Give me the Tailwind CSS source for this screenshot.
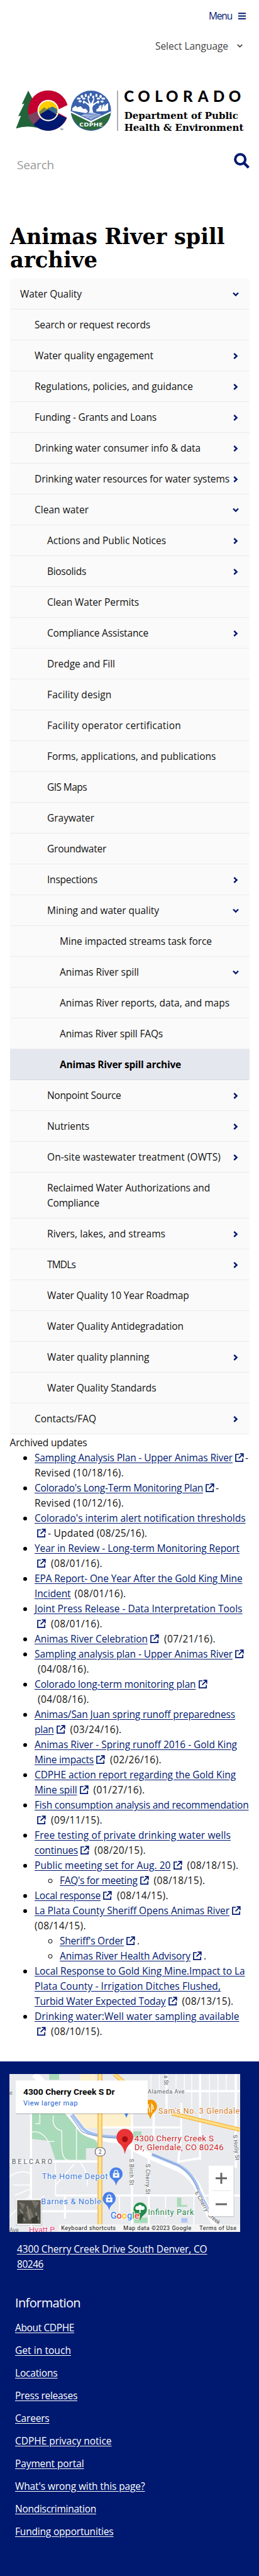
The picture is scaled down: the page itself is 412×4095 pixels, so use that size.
<!DOCTYPE html>
<html lang="en">
<head>
<meta charset="utf-8">
<title>Animas River spill archive</title>
<script src="https://cdn.jsdelivr.net/npm/@tailwindcss/browser@4"></script>
</head>
<body class="w-[412px] bg-white text-[#111] text-[15.5px] leading-6 font-['Open_Sans','Noto_Sans',sans-serif] overflow-x-hidden">

<svg class="hidden">
  <symbol id="ext" viewBox="0 0 14 14"><path d="M6 2H1v11.2h11.2V8.5M7.5 1.2h5.3v5.3M12.6 1.4 5.6 8.4" fill="none" stroke="currentColor" stroke-width="1.7"/></symbol>
  <symbol id="right" viewBox="0 0 8 10"><path d="M1.3 1 5.6 5 1.3 9" fill="none" stroke="currentColor" stroke-width="2.4"/></symbol>
  <symbol id="down" viewBox="0 0 10 8"><path d="M1 1.5 5 5.6 9 1.5" fill="none" stroke="currentColor" stroke-width="2.4"/></symbol>
</svg>

<header class="h-[357px]">
  <div class="flex h-[50px] items-center justify-end pr-[21px] text-[#001970]">
    <span data-w="37">Menu</span>
    <svg class="ml-[10px] h-[11px] w-3" viewBox="0 0 12 11"><path d="M0 1.2h12M0 5.5h12M0 9.8h12" stroke="currentColor" stroke-width="1.9"/></svg>
  </div>
  <div class="flex h-[45px] items-center justify-end pr-[26px] text-[#444]">
    <span data-w="116">Select Language</span>
    <svg class="ml-[14px] h-[6px] w-[9px]" viewBox="0 0 9 6"><path d="M.7.8 4.5 4.6 8.3.8" fill="none" stroke="currentColor" stroke-width="1.7"/></svg>
  </div>
  <svg class="ml-6 mt-[47px] block h-[68px] w-[366px]" viewBox="72 426 1098 204">
    <path d="M135 432 104 497l12-3-29 60 13-2-24 61q50-16 100-4l14-38-30-90Z" fill="#21643a"/>
    <circle cx="230" cy="527" r="96" fill="#c3002f"/>
    <path d="M160 594A96 96 0 0 0 318 563L273 542 225 530Z" fill="#001970"/>
    <path d="M134 549A96 96 0 0 0 160 593L206 548 180 530Z" fill="#7a4460"/>
    <path d="M330 497 274 524l0 12L330 567Z" fill="#fff"/>
    <circle cx="230" cy="527" r="51" fill="#fff"/>
    <circle cx="230" cy="527" r="45" fill="#ffcd00"/>
    <path d="M186 534 210 512l14 9 9-10 38 25A45 45 0 0 1 186 534Z" fill="#7b8440"/>
    <path d="M230 521 249 508 272 520 274 540H200Z" fill="#3a6f8c"/>
    <path d="M190 546 230 522l41 24A45 45 0 0 1 190 546Z" fill="#001970"/>
    <text x="286" y="620" font-size="11" font-family="Open Sans" fill="#222">TM</text>
    <circle cx="434" cy="528" r="96" fill="#3b62ad"/>
    <path d="M339 538 434 584 529 538A96 96 0 0 1 339 538Z" fill="#2b6a3c"/>
    <path d="M339 530 434 576 529 530V538L434 584 339 538Z" fill="#fff"/>
    <path d="M345 528v-12l15-12 10 8 14-6 14 14 12-2 10 14-10 8ZM460 532v-10l12-8v-8l12-6v24l6-22 8-6v12l8-10 10-6v34l-12 4Z" fill="#fff"/>
    <path d="M425 538q6-24-2-34l-25-20 3-3 24 15-8-26 4-1 13 25 13-25 4 1-7 26 27-17 3 3-30 23q-7 14 2 34Z" fill="#fff"/>
    <g fill="#fff">
      <ellipse cx="376" cy="470" rx="9" ry="5"/><ellipse cx="391" cy="460" rx="6" ry="8"/><ellipse cx="382" cy="483" rx="8" ry="5"/><ellipse cx="400" cy="487" rx="5" ry="7"/><ellipse cx="400" cy="470" rx="8" ry="5"/><ellipse cx="409" cy="455" rx="5" ry="8"/><ellipse cx="423" cy="463" rx="5" ry="8"/><ellipse cx="433" cy="451" rx="5" ry="8"/><ellipse cx="445" cy="463" rx="5" ry="7"/><ellipse cx="460" cy="455" rx="5" ry="8"/><ellipse cx="469" cy="470" rx="8" ry="5"/><ellipse cx="480" cy="460" rx="6" ry="8"/><ellipse cx="493" cy="470" rx="9" ry="5"/><ellipse cx="487" cy="484" rx="8" ry="5"/><ellipse cx="468" cy="487" rx="5" ry="7"/>
    </g>
    <path d="M385 548 425 536h20l42 12-52 23Z" fill="#b9cbe8"/>
    <path d="M385 548q30-8 50 0t52 0M402 556q20-6 34 0t34 0M418 563q10-4 18 0t18 0M400 543q20-5 36 0t34 0" fill="none" stroke="#3b62ad" stroke-width="2.5"/>
    <text x="378" y="603" font-size="28" font-weight="700" font-family="Open Sans" fill="#fff" textLength="112" lengthAdjust="spacingAndGlyphs">CDPHE</text>
    <path d="M561 432v192" stroke="#777" stroke-width="3.5"/>
    <text y="487" x="592 658 739 792 873 944 1017 1091" font-size="72" font-weight="900" font-family="Lato" fill="#000">COLORADO</text>
    <g font-size="47" font-weight="700" font-family="DejaVu Serif" fill="#000">
      <text x="593" y="567" textLength="544" lengthAdjust="spacingAndGlyphs">Department of Public</text>
      <text x="593" y="623" textLength="569" lengthAdjust="spacingAndGlyphs">Health &amp; Environment</text>
    </g>
  </svg>
  <div class="mt-[32px] flex items-start justify-between pl-[27px] pr-[15px] text-[19px] text-[#999]">
    <span class="mt-[8px]" data-w="59">Search</span>
    <svg class="mt-px size-[25px] text-[#001970]" viewBox="0 0 25 25"><circle cx="10.2" cy="10.2" r="8" fill="none" stroke="currentColor" stroke-width="4"/><path d="m16 16 7.5 7.5" stroke="currentColor" stroke-width="4.2"/></svg>
  </div>
</header>

<main>
  <h1 class="flex h-[86px] flex-col items-start overflow-hidden whitespace-nowrap pl-4 font-['DejaVu_Serif',serif] text-[36px] leading-[37px] font-bold text-black">
    <span class="block h-[37px] origin-left" data-s="341">Animas River spill</span>
    <span class="block h-[37px] origin-left" data-s="139">archive</span>
  </h1>

  <nav id="nav" class="ml-[15.5px] w-[381px]"></nav>

  <p class="mt-px h-6 pl-[15.5px]"><span data-w="123">Archived updates</span></p>
  <ul id="updates" class="h-[972px] list-disc whitespace-nowrap pl-[55px]"></ul>
</main>

<footer class="h-[818px] bg-[#001970] pt-[20px] text-white">
  <svg class="ml-[15px] block h-[251px] w-[367px] font-[Roboto]" viewBox="45 112 1101 751" preserveAspectRatio="none">
    <rect x="45" y="112" width="1101" height="751" fill="#e8eaed"/>
    <path d="M480 300h150v70H400l-60-70ZM380 112h75v40h-75Z" fill="#fdf0cc"/>
    <path d="M148 300H330L400 370 465 440V465H410V520H265L235 430 148 420ZM235 112h47v28h-47Z" fill="#a9dab9"/>
    <path d="M590 410 640 385h35v30ZM640 795h75v25h-75ZM845 700h20v35h28v8h-48Z" fill="#a9dab9"/>
    <path d="M865 797h30v22h-30Z" fill="#b4c6f5"/>
    <g stroke="#fff" stroke-width="10" fill="none">
      <path d="M148 300V863M45 528H480M265 690H1146M480 366H870M700 193H1146M630 300V863M710 480V863M795 112V300M733 300V410M955 112V520M1125 112V560M865 250V390L850 540M850 530l105-18M310 690V800M180 765H480"/>
      <path d="M45 600q60-40 105-10M60 640l85 0M70 690l70-30M385 535q40 50 30 110M355 540l-90 100M265 530V690M45 790l100-100M210 690l-60 80M570 690v110M790 690v110M925 690v173" stroke-width="5"/>
      <path d="M190 300v48h-20M255 310q-10 60 40 72v70q0 70 35 70M150 388q50-10 80 45h30M365 300V520" stroke-width="5" stroke="#eef7f0"/>
      <path d="M720 112V190M760 112V190M840 112v75M880 112v75M915 112v190M1000 112v230M1040 112v220M1080 112v75" stroke-width="4"/>
    </g>
    <path d="M165 112 215 165 340 310 395 380Q440 415 560 425 650 470 710 500L850 560Q930 600 960 690 1000 800 1060 863" fill="none" stroke="#fff" stroke-width="32"/>
    <path d="M345 305 395 370Q430 408 560 412 M725 495 850 545Q925 585 950 670L1000 770" fill="none" stroke="#a4c0f3" stroke-width="14"/>
    <path d="M335 308 390 385Q440 412 560 417M725 492 855 550Q915 590 942 660" fill="none" stroke="#7697ba" stroke-width="3"/>
    <path d="M477 112V863" stroke="#f7b948" stroke-width="23"/><path d="M477 112V863" stroke="#ffe39a" stroke-width="13"/>
    <path d="m545 112 45 38M820 300 1146 377" stroke="#f7b948" stroke-width="20"/><path d="m545 112 45 38M820 300 1146 377" stroke="#ffdf88" stroke-width="11"/>
    <g stroke="#f1f3f4" stroke-width="5" paint-order="stroke" fill="#5f6368" font-size="27">
      <text x="705" y="204" textLength="175">Alameda Ave</text>
      <text transform="translate(783 118) rotate(90)">a St</text>
      <text transform="translate(1112 402) rotate(84)" textLength="122">S Holly St</text>
      <text transform="translate(618 515) rotate(90)" textLength="126">S Birch St</text>
      <text transform="translate(696 540) rotate(90)" textLength="144">S Cherry St</text>
      <text transform="translate(930 676) rotate(61)" textLength="105">E Cherry</text>
      <text transform="translate(990 785) rotate(40)">Creek</text>
      <text x="45" y="212">e</text><text x="45" y="862">Ave</text>
      <text x="56" y="540" font-size="32" textLength="193">BELCARO</text>
    </g>
    <rect x="454" y="462" width="48" height="40" rx="19" fill="#fff" stroke="#555" stroke-width="3"/>
    <text x="470" y="492" font-size="26" fill="#555">2</text>
    <path d="M594 300h18l-9 20Z" fill="#4285f4"/>
    <path d="M717 327q-5-22-22-38a32 32 0 1 1 45 0q-18 16-23 38Z" fill="#f29900"/><path d="M708 255v14q0 6 5 6v20M724 295v-40q8 10 8 22h-8" stroke="#fff" stroke-width="4" fill="none"/>
    <g stroke="#fff" stroke-width="5" paint-order="stroke" font-size="40">
      <text x="756" y="300" fill="#d57a1c" font-size="37" textLength="388">Sam's No. 3 Glendale</text>
      <text x="641" y="431" fill="#c5221f" textLength="379">4300 Cherry Creek S</text>
      <text x="641" y="474" fill="#c5221f" textLength="426">Dr, Glendale, CO 80246</text>
      <text x="200" y="613" fill="#3573d6" font-size="38" textLength="314">The Home Depot</text>
      <text x="196" y="731" fill="#3573d6" font-size="38" textLength="286">Barnes &amp; Noble</text>
      <text x="706" y="783" fill="#23834a" font-size="38" textLength="219">Infinity Park</text>
      <text x="138" y="866" fill="#e0447c" font-size="38">Hyatt P</text>
    </g>
    <path d="M596 493q-5-32-24-48a40 40 0 1 1 48 0q-19 16-24 48Z" fill="#ea3335"/><circle cx="596" cy="422" r="14" fill="#a50e0e"/>
    <g fill="#4a80e8">
      <path d="M554 643q-4-22-20-32a31 31 0 1 1 40 0q-16 10-20 32ZM521 760q-4-22-20-32a31 31 0 1 1 40 0q-16 10-20 32Z"/>
      <path d="M539 583h30v22h-30ZM506 700h30v22h-30Z" fill="#fff"/>
      <path d="M546 583v-5a8 8 0 0 1 16 0v5M513 700v-5a8 8 0 0 1 16 0v5" fill="none" stroke="#fff" stroke-width="4"/>
      <path d="M547 590a7 7 0 0 0 14 0ZM514 707a7 7 0 0 0 14 0Z"/>
    </g>
    <path d="M669 810q-3-16-20-30a32 32 0 1 1 40 0q-17 14-20 30Z" fill="#238a4c"/><path d="M652 758a9 9 0 0 1 6-17 11 11 0 0 1 20 0 9 9 0 0 1 6 17ZM665 755h6v18h-6Z" fill="#fff"/>
    <text x="527" y="799" font-size="42" font-weight="500" stroke="#fff" stroke-width="6" paint-order="stroke" textLength="138" lengthAdjust="spacingAndGlyphs"><tspan fill="#4285f4">G</tspan><tspan fill="#ea4335">o</tspan><tspan fill="#fbbc05">o</tspan><tspan fill="#4285f4">g</tspan><tspan fill="#34a853">l</tspan><tspan fill="#ea4335">e</tspan></text>
    <rect x="77" y="147" width="628" height="156" fill="#0003"/><rect x="75" y="143" width="630" height="156" fill="#fff"/>
    <text x="111" y="212" font-size="39" font-weight="700" fill="#000" textLength="437" lengthAdjust="spacingAndGlyphs">4300 Cherry Creek S Dr</text>
    <text x="111" y="263" font-size="33" fill="#2062d0" textLength="259">View larger map</text>
    <rect x="76" y="708" width="124" height="124" fill="#0003"/><rect x="77" y="706" width="121" height="123" rx="5" fill="#fff"/><rect x="82" y="712" width="112" height="112" fill="#55544c"/>
    <path d="m90 720 30 12-12 26ZM150 712l18 40 20-30ZM125 770l20-20 16 40-22 20Z" fill="#75726a"/><path d="m130 740 12 60M100 780l20 30M170 770l14 34M95 755l14 20" stroke="#8b867b" stroke-width="7"/><path d="M84 790q14-25 30-4l-8 34H84ZM150 800l30-16v38h-26Z" fill="#393a33"/>
    <rect x="998" y="552" width="120" height="240" fill="#0002"/><rect x="996" y="548" width="119" height="240" fill="#fff"/><path d="M1010 667h92" stroke="#e6e6e6" stroke-width="3"/>
    <path d="M1029 608h54M1056 582v52M1029 731h54" stroke="#666" stroke-width="9"/>
    <rect x="280" y="826" width="866" height="37" fill="#f5f5f5" fill-opacity=".88"/>
    <g font-size="27" fill="#111"><text x="292" y="854" textLength="260">Keyboard shortcuts</text><text x="589" y="854" textLength="324">Map data ©2023 Google</text><text x="952" y="854" textLength="176">Terms of Use</text></g>
  </svg>
  <p class="mt-[15px] h-[75px] whitespace-nowrap pl-[27px]"><a class="underline underline-offset-2"><span data-w="302.5">4300 Cherry Creek Drive South Denver, CO</span><br><span data-w="42">80246</span></a></p>
  <h2 class="h-[50px] pl-6 pt-[11px] text-[20px]"><span data-w="104">Information</span></h2>
  <ul class="flex flex-col gap-3 whitespace-nowrap pl-6">
    <li><a class="underline underline-offset-2" data-w="94">About CDPHE</a></li>
    <li><a class="underline underline-offset-2" data-w="89">Get in touch</a></li>
    <li><a class="underline underline-offset-2" data-w="67.5">Locations</a></li>
    <li><a class="underline underline-offset-2" data-w="99">Press releases</a></li>
    <li><a class="underline underline-offset-2" data-w="54.5">Careers</a></li>
    <li><a class="underline underline-offset-2" data-w="153.5">CDPHE privacy notice</a></li>
    <li><a class="underline underline-offset-2" data-w="109.5">Payment portal</a></li>
    <li><a class="underline underline-offset-2" data-w="206.5">What's wrong with this page?</a></li>
    <li><a class="underline underline-offset-2" data-w="129">Nondiscrimination</a></li>
    <li><a class="underline underline-offset-2" data-w="156.5">Funding opportunities</a></li>
  </ul>
</footer>

<script>
// Navigation rows: [level, label, label width, chevron]
const rows = [
  [0,'Water Quality',98,'down'],[1,'Search or request records',184],[1,'Water quality engagement',189,'right'],
  [1,'Regulations, policies, and guidance',252,'right'],[1,'Funding - Grants and Loans',194,'right'],
  [1,'Drinking water consumer info & data',264,'right'],[1,'Drinking water resources for water systems',310,'right'],
  [1,'Clean water',86,'down'],[2,'Actions and Public Notices',189,'right'],[2,'Biosolids',62,'right'],
  [2,'Clean Water Permits',146],[2,'Compliance Assistance',161,'right'],[2,'Dredge and Fill',108],[2,'Facility design',102.5],
  [2,'Facility operator certification',213],[2,'Forms, applications, and publications',268.5],[2,'GIS Maps',63],
  [2,'Graywater',75],[2,'Groundwater',94],[2,'Inspections',80,'right'],[2,'Mining and water quality',178,'down'],
  [3,'Mine impacted streams task force',242],[3,'Animas River spill',126,'down'],[3,'Animas River reports, data, and maps',270],
  [3,'Animas River spill FAQs',164],[3,'Animas River spill archive',193,'current'],
  [2,'Nonpoint Source',117.5,'right'],[2,'Nutrients',67,'right'],[2,'On-site wastewater treatment (OWTS)',276,'right'],
  [2,'Reclaimed Water Authorizations and|Compliance','259|83'],[2,'Rivers, lakes, and streams',188,'right'],
  [2,'TMDLs',45,'right'],[2,'Water Quality 10 Year Roadmap',225.5],[2,'Water Quality Antidegradation',217],
  [2,'Water quality planning',162.5,'right'],[2,'Water Quality Standards',173.5],[1,'Contacts/FAQ',98,'right']
];
const pads = ['pl-[16.5px]','pl-[39.5px]','pl-[59.5px]','pl-[79.5px]'];
const fit = (text, w) => {
  const ws = String(w).split('|');
  return text.split('|').map((t, i) => `<span data-w="${ws[i]}">${t.replace('&','&amp;')}</span>`).join('<br>');
};
document.getElementById('nav').innerHTML = rows.map(([l, t, w, k]) => {
  const skin = k === 'current' ? 'bg-[#e5e7ef] border-[#dadada] font-bold text-black' : 'bg-[#fafafa] border-[#ebebeb]';
  const icon = k === 'down' ? '<svg class="absolute right-[16.5px] top-[21px] h-2 w-[10px] text-[#001970]"><use href="#down"/></svg>'
    : k === 'right' ? '<svg class="absolute right-[17.5px] top-5 h-[10px] w-2 text-[#001970]"><use href="#right"/></svg>' : '';
  return `<div class="relative whitespace-nowrap border-b py-3 ${pads[l]} ${skin}"><a>${fit(t, w)}</a>${icon}</div>`;
}).join('');

// Archive entries: [link text, link width, external icon, text after, its width, its left gap, sub-entries]
const R = 142, D = 82;
const items = [
  ['Sampling Analysis Plan - Upper Animas River',315,1,'-|Revised (10/18/16).','4|'+R,2],
  ["Colorado's Long-Term Monitoring Plan",268,1,'-|Revised (10/12/16).','4|'+R,2],
  ["Colorado's interim alert notification thresholds|",335.5,1,'- Updated (08/25/16).',158,3],
  ['Year in Review - Long-term Monitoring Report|',326,1,'(08/01/16).',D,8],
  ['EPA Report- One Year After the Gold King Mine|Incident','330.5|57.5',0,'(08/01/16).',D,6],
  ['Joint Press Release - Data Interpretation Tools|',330.5,1,'(08/01/16).',D,8],
  ['Animas River Celebration',180,1,'(07/21/16).',D,8],
  ['Sampling analysis plan - Upper Animas River',315,1,'|(04/08/16).','|'+D,5],
  ['Colorado long-term monitoring plan',256.5,1,'|(04/08/16).','|'+D,5],
  ['Animas/San Juan spring runoff preparedness|plan','319|30.5',1,'(03/24/16).',D,8],
  ['Animas River - Spring runoff 2016 - Gold King|Mine impacts','322|94',1,'(02/26/16).',D,8],
  ['CDPHE action report regarding the Gold King|Mine spill','320|67.5',1,'(01/27/16).',D,8],
  ['Fish consumption analysis and recommendation|',340.5,1,'(09/11/15).',D,8],
  ['Free testing of private drinking water wells|continues','312|69',1,'(08/20/15).',D,8],
  ['Public meeting set for Aug. 20',216.5,1,'(08/18/15).',D,8,[["FAQ's for meeting",123.5,1,'(08/18/15).',D,8]]],
  ['Local response',105,1,'(08/14/15).',D,8],
  ['La Plata County Sheriff Opens Animas River',310,1,'|(08/14/15).','|'+D,0,
    [["Sheriff's Order",102,1,'.',4,3],['Animas River Health Advisory',208,1,'.',4,3]]],
  ['Local Response to Gold King Mine.Impact to La|Plata County - Irrigation Ditches Flushed,|Turbid Water Expected Today','334.5|296|208.5',1,'(08/13/15).',D,8],
  ['Drinking water:Well water sampling available|',325.5,1,'(08/10/15).',D,8]
];
const entry = ([t, w, ext, after, aw, gap, sub]) => {
  const icon = ext ? '<svg class="ml-1 inline-block size-[14px] -mt-[3px] align-middle text-[#001970]"><use href="#ext"/></svg>' : '';
  const indent = after.startsWith('|') && gap === 5;
  const tail = indent ? '<br><span class="ml-[5px]" data-w="82">' + after.slice(1) + '</span>'
    : `<span style="margin-left:${gap}px">${fit(after, aw)}</span>`;
  const nested = sub ? `<ul class="list-[circle] pl-10">${sub.map(entry).join('')}</ul>` : '';
  return `<li class="marker:text-black"><a class="text-[#001970] underline underline-offset-2">${fit(t, w)}</a>${icon}${tail}${nested}</li>`;
};
document.getElementById('updates').innerHTML = items.map(entry).join('');

// Fit each run of text to its width; repeated because styles and fonts may arrive late
function fitAll() {
  document.querySelectorAll('[data-w]').forEach(e => {
    e.style.letterSpacing = '0px';
    const n = e.textContent.length, w = parseFloat(e.dataset.w);
    if (n && w) e.style.letterSpacing = (w - e.getBoundingClientRect().width) / n + 'px';
  });
  document.querySelectorAll('[data-s]').forEach(e => {
    e.style.transform = `scaleX(${e.dataset.s / e.offsetWidth})`;
  });
}
fitAll();
addEventListener('load', fitAll);
document.fonts.ready.then(fitAll);
new ResizeObserver(fitAll).observe(document.body);
[0, 50, 150, 400].forEach(t => setTimeout(fitAll, t));
</script>
</body>
</html>
